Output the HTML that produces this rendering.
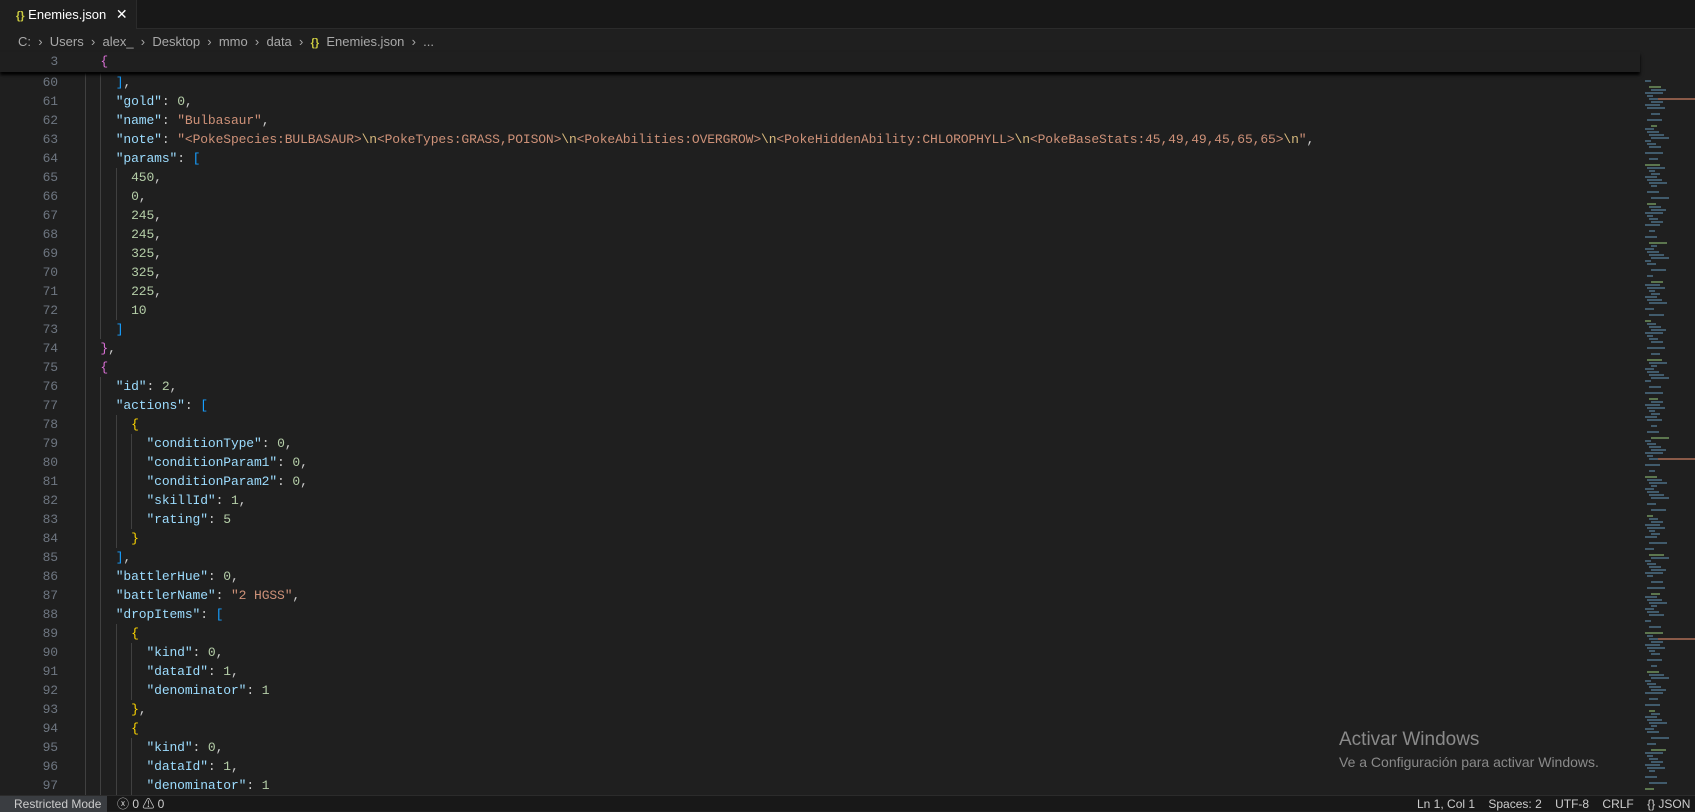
<!DOCTYPE html>
<html><head><meta charset="utf-8"><style>
*{margin:0;padding:0;box-sizing:border-box}
body{width:1695px;height:811px;background:#1f1f1f;overflow:hidden;position:relative;font-family:"Liberation Sans",sans-serif}
.tabbar{position:absolute;left:0;top:0;width:1695px;height:29px;background:#181818;border-bottom:1px solid #2b2b2b}
.tab{position:absolute;left:0;top:0;width:137px;height:29px;background:#1f1f1f;border-right:1px solid #2b2b2b;color:#fff;font-size:13px;line-height:29px;padding-left:16px}
.br{position:absolute;left:18px;top:33px;color:#a9a9a9;font-size:13px;line-height:18px;white-space:pre}
.code{font-family:"Liberation Mono",monospace;font-size:13px;letter-spacing:-0.12px;white-space:pre}
.ln{position:absolute;left:0;width:58px;text-align:right;color:#6e7681;line-height:19px}
.tx{position:absolute;left:85px;line-height:19px;color:#cccccc}
.g{position:absolute;width:1px;background:#404040;height:19px}
.k{color:#9cdcfe}.s{color:#ce9178}.n{color:#b5cea8}.e{color:#d7ba7d}
.b1{color:#ffd700}.b2{color:#da70d6}.b3{color:#179fff}
.sticky{position:absolute;left:0;top:52px;width:1640px;height:20px;background:#1f1f1f;box-shadow:0 3px 3px #000}
.status{position:absolute;left:0;top:795px;width:1695px;height:16px;background:#181818;border-top:1px solid #2b2b2b;color:#ccc;font-size:12px;line-height:16px}
.mm{position:absolute;height:2px}
</style></head><body>
<div class="tabbar"><div class="tab"><span style="color:#cbcb41;font-weight:bold;font-size:11px">{}</span> Enemies.json <span style="margin-left:6px;font-size:14px">✕</span></div></div>
<div class="br">C:  ›  Users  ›  alex_  ›  Desktop  ›  mmo  ›  data  ›  <span style="color:#cbcb41;font-weight:bold;font-size:11px">{}</span>  Enemies.json  ›  ...</div>
<div id="ed"></div>
<div class="sticky code"><div class="ln" style="top:0">3</div><div class="tx" style="top:0"><span class="b2">  {</span></div></div>
<div style="position:absolute;left:1339px;top:729px;color:#8a8a8a;font-size:19px">Activar Windows</div>
<div style="position:absolute;left:1339px;top:754px;color:#8a8a8a;font-size:14px">Ve a Configuración para activar Windows.</div>
<div class="status"><span style="position:absolute;left:0;top:0;width:107px;height:16px;background:#3a3d41;padding-left:14px">Restricted Mode</span><span style="position:absolute;left:117px">ⓧ 0 ⚠ 0</span><span style="position:absolute;left:1417px;white-space:pre">Ln 1, Col 1    Spaces: 2    UTF-8    CRLF    {} JSON</span></div>
<script>
const L=[
[2,'<span class="b3">]</span>,'],
[2,'<span class="k">"gold"</span>: <span class="n">0</span>,'],
[2,'<span class="k">"name"</span>: <span class="s">"Bulbasaur"</span>,'],
[2,'<span class="k">"note"</span>: <span class="s">"&lt;PokeSpecies:BULBASAUR&gt;<span class="e">\\n</span>&lt;PokeTypes:GRASS,POISON&gt;<span class="e">\\n</span>&lt;PokeAbilities:OVERGROW&gt;<span class="e">\\n</span>&lt;PokeHiddenAbility:CHLOROPHYLL&gt;<span class="e">\\n</span>&lt;PokeBaseStats:45,49,49,45,65,65&gt;<span class="e">\\n</span>"</span>,'],
[2,'<span class="k">"params"</span>: <span class="b3">[</span>'],
[3,'<span class="n">450</span>,'],[3,'<span class="n">0</span>,'],[3,'<span class="n">245</span>,'],[3,'<span class="n">245</span>,'],[3,'<span class="n">325</span>,'],[3,'<span class="n">325</span>,'],[3,'<span class="n">225</span>,'],[3,'<span class="n">10</span>'],
[2,'<span class="b3">]</span>'],
[1,'<span class="b2">}</span>,'],
[1,'<span class="b2">{</span>'],
[2,'<span class="k">"id"</span>: <span class="n">2</span>,'],
[2,'<span class="k">"actions"</span>: <span class="b3">[</span>'],
[3,'<span class="b1">{</span>'],
[4,'<span class="k">"conditionType"</span>: <span class="n">0</span>,'],
[4,'<span class="k">"conditionParam1"</span>: <span class="n">0</span>,'],
[4,'<span class="k">"conditionParam2"</span>: <span class="n">0</span>,'],
[4,'<span class="k">"skillId"</span>: <span class="n">1</span>,'],
[4,'<span class="k">"rating"</span>: <span class="n">5</span>'],
[3,'<span class="b1">}</span>'],
[2,'<span class="b3">]</span>,'],
[2,'<span class="k">"battlerHue"</span>: <span class="n">0</span>,'],
[2,'<span class="k">"battlerName"</span>: <span class="s">"2 HGSS"</span>,'],
[2,'<span class="k">"dropItems"</span>: <span class="b3">[</span>'],
[3,'<span class="b1">{</span>'],
[4,'<span class="k">"kind"</span>: <span class="n">0</span>,'],
[4,'<span class="k">"dataId"</span>: <span class="n">1</span>,'],
[4,'<span class="k">"denominator"</span>: <span class="n">1</span>'],
[3,'<span class="b1">}</span>,'],
[3,'<span class="b1">{</span>'],
[4,'<span class="k">"kind"</span>: <span class="n">0</span>,'],
[4,'<span class="k">"dataId"</span>: <span class="n">1</span>,'],
[4,'<span class="k">"denominator"</span>: <span class="n">1</span>']
];
let h='';const cw=7.68;
L.forEach((l,i)=>{const t=72.5+i*19;const lvl=l[0];
h+='<div class="code"><div class="ln" style="top:'+t+'px">'+(60+i)+'</div>';
for(let g=0;g<lvl;g++)h+='<div class="g" style="left:'+(85+g*2*cw).toFixed(1)+'px;top:'+t+'px"></div>';
h+='<div class="tx" style="top:'+t+'px">'+' '.repeat(lvl*2)+l[1]+'</div></div>';});
for(let y=80;y<790;y+=3){const r=(y*7919)%13;if(r>9)continue;
const x=1645+((y*31)%4)*2;const w=6+((y*17)%5)*3;
h+='<div class="mm" style="left:'+x+'px;top:'+y+'px;width:'+w+'px;background:'+(r==3?'#6b8c5a':'#4a6a80')+';opacity:.8"></div>';
if(y%180==98)h+='<div class="mm" style="left:'+(x+w)+'px;top:'+y+'px;width:'+(1695-x-w)+'px;background:#8a5a48"></div>';}
document.getElementById('ed').innerHTML=h;
</script>
</body></html>
